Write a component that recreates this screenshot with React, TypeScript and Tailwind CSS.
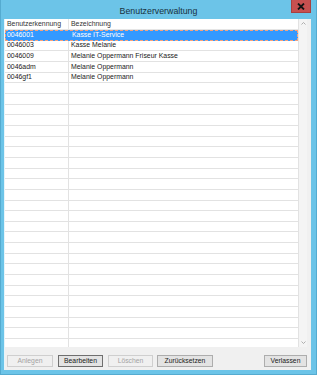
import React from 'react';

type Row = { id: string; name: string };

const users: Row[] = [
  { id: '0046001', name: 'Kasse IT-Service' },
  { id: '0046003', name: 'Kasse Melanie' },
  { id: '0046009', name: 'Melanie Oppermann Friseur Kasse' },
  { id: '0046adm', name: 'Melanie Oppermann' },
  { id: '0046gf1', name: 'Melanie Oppermann' },
];

const rows: Row[] = [...users, ...Array.from({ length: 26 }, () => ({ id: '', name: '' }))];

function Btn({ label, disabled, focused, width }: { label: string; disabled?: boolean; focused?: boolean; width: string }) {
  const base = 'h-[12px] flex items-center justify-center leading-none text-[6.8px] border';
  let look = 'bg-[#e3e3e3] border-[#adadad] text-[#1a1a1a]';
  if (disabled) look = 'bg-[#f0f0f0] border-[#cfcfcf] text-[#a3a3a3]';
  if (focused) look = 'bg-[#e3e3e3] border-[#6f6f6f] text-[#1a1a1a]';
  return (
    <button type="button" className={`${base} ${look} ${width}`}>
      {label}
    </button>
  );
}

export default function App() {
  return (
    <div
      className="w-[317px] h-[375px] flex flex-col bg-[#6cc4e8] border-l border-r border-b border-[#55abd0] overflow-hidden"
      style={{ fontFamily: '"Liberation Sans", Arial, sans-serif' }}
    >
      {/* title bar */}
      <div className="relative h-[19px] shrink-0 flex items-center justify-center">
        <span className="text-[8.8px] text-[#18323f] leading-none pt-[3px]">Benutzerverwaltung</span>
        <div className="absolute right-[5px] top-0 w-[20px] h-[13px] bg-[#c75050] border border-[#a84040] border-t-0 flex items-center justify-center">
          <svg width="8" height="7" viewBox="0 0 8 7">
            <path d="M1 0.5 L7 6.5 M7 0.5 L1 6.5" stroke="#141414" strokeWidth="1.8" />
          </svg>
        </div>
      </div>

      <div className="flex-1 flex pl-[3px] pr-[5px] pb-[4px]">
        <div className="flex-1 flex flex-col bg-[#f0f0f0] border-l border-[#e6f4fa]">
          {/* list view */}
          <div className="h-[328px] w-[302px] flex bg-white overflow-hidden">
            <div className="flex-1 flex flex-col overflow-hidden text-[6.9px] text-[#1a1a1a]">
              <div className="h-[11px] shrink-0 flex border-b border-[#e5e5e5] text-[#333]">
                <div className="w-[64px] pl-[2px] flex items-center border-r border-[#e5e5e5]">Benutzerkennung</div>
                <div className="flex-1 pl-[2px] flex items-center">Bezeichnung</div>
              </div>
              {rows.map((r, i) => {
                const sel = i === 0;
                return (
                  <div
                    key={i}
                    className={`h-[10.67px] shrink-0 flex ${
                      sel ? 'bg-[#3399ff] text-white border border-dashed border-[#f4a27c]' : 'border-b border-[#e2e2e2]'
                    }`}
                  >
                    <div className={`w-[64px] flex items-center ${sel ? 'pl-[1px]' : 'pl-[2px] border-r border-[#e2e2e2]'}`}>{r.id}</div>
                    <div className="flex-1 pl-[2px] flex items-center">{r.name}</div>
                  </div>
                );
              })}
            </div>
            {/* scrollbar */}
            <div className="w-[9px] shrink-0 flex flex-col justify-between items-center bg-[#f4f4f4] border-l border-[#e2e2e2] py-[3px]">
              <svg width="5" height="3" viewBox="0 0 5 3">
                <path d="M0.5 2.5 L2.5 0.5 L4.5 2.5" stroke="#a6a6a6" strokeWidth="0.9" fill="none" />
              </svg>
              <svg width="5" height="3" viewBox="0 0 5 3">
                <path d="M0.5 0.5 L2.5 2.5 L4.5 0.5" stroke="#a6a6a6" strokeWidth="0.9" fill="none" />
              </svg>
            </div>
          </div>

          {/* buttons */}
          <div className="flex items-start pt-[8px] pl-[2px] pr-[4px]">
            <Btn label="Anlegen" disabled width="w-[46px]" />
            <div className="w-[5px]" />
            <Btn label="Bearbeiten" focused width="w-[45px]" />
            <div className="w-[5px]" />
            <Btn label="Löschen" disabled width="w-[45px]" />
            <div className="w-[4px]" />
            <Btn label="Zurücksetzen" width="w-[56px]" />
            <div className="flex-1" />
            <Btn label="Verlassen" width="w-[43px]" />
          </div>
        </div>
      </div>
    </div>
  );
}
